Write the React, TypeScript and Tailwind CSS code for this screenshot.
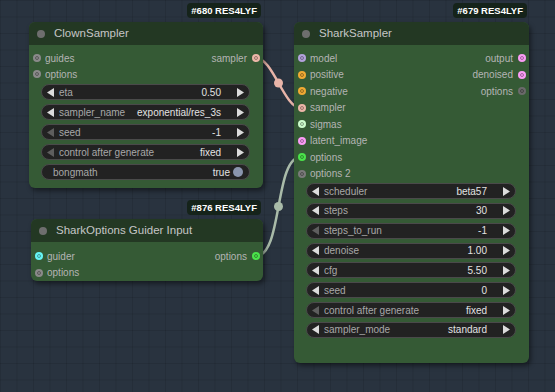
import React from "react";

type Slot = { label: string; color: string };
type Widget = { label: string; value: string; dimLeft?: boolean; toggle?: boolean };

function Dot({ color }: { color: string }) {
  return (
    <span className={`w-[8px] h-[8px] rounded-full shrink-0 flex items-center justify-center ${color}`}>
      <span className="w-[4px] h-[4px] rounded-full border border-black/35" />
    </span>
  );
}

function Arrow({ dir, dim }: { dir: "l" | "r"; dim?: boolean }) {
  return (
    <svg width="7" height="9" viewBox="0 0 7 9" className="shrink-0">
      <polygon points={dir === "l" ? "7,0 7,9 0,4.5" : "0,0 0,9 7,4.5"} fill={dim ? "#5e5e5e" : "#dcdcdc"} />
    </svg>
  );
}

function WidgetRow({ w }: { w: Widget }) {
  if (w.toggle) {
    return (
      <div className="h-[16px] rounded-full bg-[#222222] border border-[#4a4a4a] flex items-center pl-[11px] pr-[6px] text-[10px]">
        <span className="text-[#a8a8a8]">{w.label}</span>
        <span className="ml-auto text-[#e2e2e2]">{w.value}</span>
        <span className="ml-[3px] w-[10px] h-[10px] rounded-full bg-[#8a95ad]" />
      </div>
    );
  }
  return (
    <div className="h-[16px] rounded-full bg-[#222222] border border-[#4a4a4a] flex items-center pl-[5px] pr-[5px] text-[10px]">
      <Arrow dir="l" dim={w.dimLeft} />
      <span className="ml-[5px] text-[#a8a8a8]">{w.label}</span>
      <span className="ml-auto text-[#e2e2e2]">{w.value}</span>
      <span className="ml-[16px]">
        <Arrow dir="r" />
      </span>
    </div>
  );
}

function SlotRows({ inputs, outputs, rowClass }: { inputs: Slot[]; outputs: Slot[]; rowClass: string }) {
  const n = Math.max(inputs.length, outputs.length);
  return (
    <div className="flex flex-col">
      {Array.from({ length: n }).map((_, i) => (
        <div key={i} className={`${rowClass} flex items-center justify-between pl-[4px] pr-[3px] text-[10px] text-[#b4b4b4]`}>
          {inputs[i] ? (
            <div className="flex items-center gap-[4px]">
              <Dot color={inputs[i].color} />
              <span>{inputs[i].label}</span>
            </div>
          ) : (
            <span />
          )}
          {outputs[i] ? (
            <div className="flex items-center gap-[5px]">
              <span>{outputs[i].label}</span>
              <Dot color={outputs[i].color} />
            </div>
          ) : null}
        </div>
      ))}
    </div>
  );
}

function Node({
  className,
  badge,
  title,
  children,
}: {
  className: string;
  badge: string;
  title: string;
  children: React.ReactNode;
}) {
  return (
    <div className={`absolute ${className}`}>
      <div className="absolute top-[-19px] right-[2px] h-[15px] px-[4px] rounded-[4px] bg-[#15231a] flex items-center text-[9.5px] font-bold text-white leading-none">
        {badge}
      </div>
      <div className="rounded-[6px] bg-[#355a35] shadow-[2px_3px_5px_rgba(0,0,0,0.45)] overflow-hidden h-full flex flex-col">
        <div className="h-[23px] shrink-0 bg-[#233823] flex items-center pl-[8px] gap-[9px]">
          <span className="w-[8px] h-[8px] rounded-full bg-[#6e6e6e]" />
          <span className="text-[11.5px] text-[#c6c6c6]">{title}</span>
        </div>
        {children}
      </div>
    </div>
  );
}

const grey = "bg-[#8a8a8a]";

const clownWidgets: Widget[] = [
  { label: "eta", value: "0.50" },
  { label: "sampler_name", value: "exponential/res_3s" },
  { label: "seed", value: "-1", dimLeft: true },
  { label: "control after generate", value: "fixed", dimLeft: true },
  { label: "bongmath", value: "true", toggle: true },
];

const sharkWidgets: Widget[] = [
  { label: "scheduler", value: "beta57" },
  { label: "steps", value: "30" },
  { label: "steps_to_run", value: "-1", dimLeft: true },
  { label: "denoise", value: "1.00" },
  { label: "cfg", value: "5.50" },
  { label: "seed", value: "0" },
  { label: "control after generate", value: "fixed", dimLeft: true },
  { label: "sampler_mode", value: "standard" },
];

export default function App() {
  return (
    <div className="relative w-[555px] h-[392px] overflow-hidden bg-[#29333f] bg-[linear-gradient(rgba(0,0,0,0.1)_1px,transparent_1px),linear-gradient(90deg,rgba(0,0,0,0.1)_1px,transparent_1px)] bg-[size:16.5px_16.5px] font-['Liberation_Sans',Arial,sans-serif]">
      {/* links */}
      <svg className="absolute inset-0" width="555" height="392">
        <path d="M256,58 C273,58 284,108 301,108" stroke="#e8b4a8" strokeWidth="2.5" fill="none" />
        <circle cx="278.5" cy="83" r="4.5" fill="#e8b4a8" />
        <path d="M256,256 C283,256 274,157 301,157" stroke="#a9bba9" strokeWidth="2.5" fill="none" />
        <circle cx="278.5" cy="206.5" r="4.5" fill="#a9bba9" />
      </svg>

      <Node className="left-[29px] top-[22px] w-[234px]" badge="#680 RES4LYF" title="ClownSampler">
        <div className="pt-[5px] pb-[8px]">
          <SlotRows
            rowClass="h-[16px]"
            inputs={[
              { label: "guides", color: grey },
              { label: "options", color: grey },
            ]}
            outputs={[{ label: "sampler", color: "bg-[#ecb6a8]" }]}
          />
          <div className="mt-[2px] pl-[12px] pr-[13px] flex flex-col gap-[4px]">
            {clownWidgets.map((w) => (
              <WidgetRow key={w.label} w={w} />
            ))}
          </div>
        </div>
      </Node>

      <Node className="left-[294px] top-[22px] w-[235px] h-[341px]" badge="#679 RES4LYF" title="SharkSampler">
        <div className="pt-[4.75px]">
          <SlotRows
            rowClass="h-[16.5px]"
            inputs={[
              { label: "model", color: "bg-[#b3a2dc]" },
              { label: "positive", color: "bg-[#f0aa34]" },
              { label: "negative", color: "bg-[#f0aa34]" },
              { label: "sampler", color: "bg-[#ecb6a8]" },
              { label: "sigmas", color: "bg-[#cdfccd]" },
              { label: "latent_image", color: "bg-[#fa9cf5]" },
              { label: "options", color: "bg-[#4be34b]" },
              { label: "options 2", color: "bg-[#7a7a7a]" },
            ]}
            outputs={[
              { label: "output", color: "bg-[#fa9cf5]" },
              { label: "denoised", color: "bg-[#fa9cf5]" },
              { label: "options", color: "bg-[#6a6a6a]" },
            ]}
          />
          <div className="mt-[1.25px] pl-[12px] pr-[13px] flex flex-col gap-[3.85px]">
            {sharkWidgets.map((w) => (
              <WidgetRow key={w.label} w={w} />
            ))}
          </div>
        </div>
      </Node>

      <Node className="left-[31px] top-[219px] w-[232px]" badge="#876 RES4LYF" title="SharkOptions Guider Input">
        <div className="pt-[6px]">
          <SlotRows
            rowClass="h-[16.5px]"
            inputs={[
              { label: "guider", color: "bg-[#66f4f4]" },
              { label: "options", color: grey },
            ]}
            outputs={[{ label: "options", color: "bg-[#4be34b]" }]}
          />
        </div>
      </Node>
    </div>
  );
}
